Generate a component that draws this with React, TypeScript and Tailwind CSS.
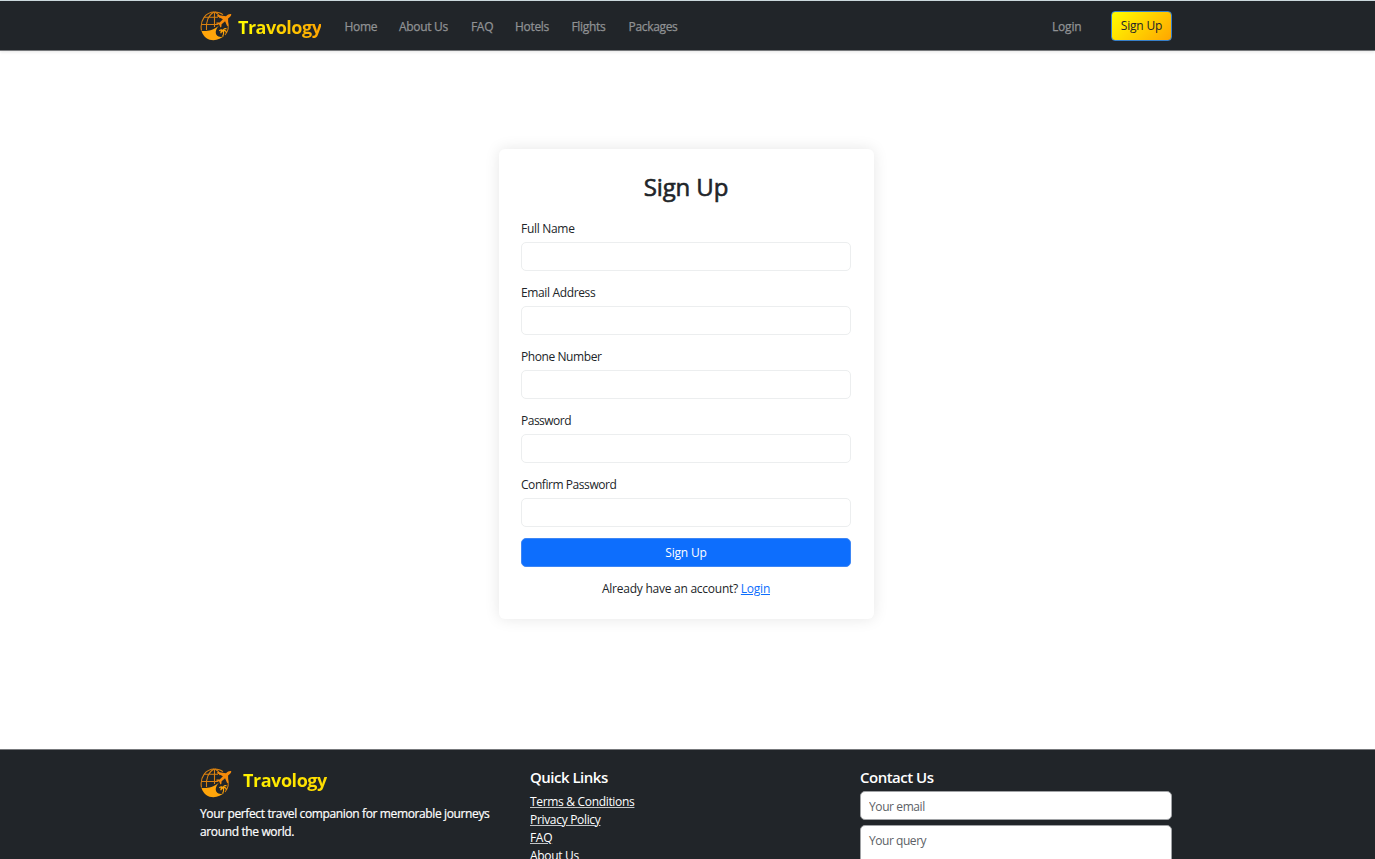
import React from "react";

function Logo() {
  return (
    <svg width="32" height="32" viewBox="0 0 32 32" fill="none" className="shrink-0">
      <g stroke="#d9800f" strokeWidth="1.1">
        <path d="M1.500 20.500C-.5 10 6 2 14.500 2c4 0 6.500 1 8.500 2.700" />
        <path d="M27.500 12c1.500 4.500.5 9.500-2.500 13" />
        <path d="M14.500 2v15M14 2C8.500 5 5.500 12 6.500 20M15 2c3 1.500 4.500 3.500 5.200 6M4 7.300h14M1.200 14.500h17" />
      </g>
      <path d="M1.500 21C7 21.500 13 20.500 19 15.500c-4 4.500-4.500 9-.5 11 2.500 1 5 .5 6.500-1.500C18 32.500 5 32.500 1.500 21Z" fill="#ffa50a" />
      <path d="M31.300 4.200c-1.800-.5-3.500.4-5.300 2l-8.300-1.100-1 1 6.200 3.100-3.200 3.400-3-.2-.8.8 3.300 1.400 1.200 2.800 1-.6.200-2.500 3.500-3 2.100 5 1-.9-.1-6.800c1.700-1.500 3.200-2.700 3.200-4.400Z" fill="#f58a0a" />
      <path d="M22.700 26.500c1-2 1.200-4 .6-6M23.200 20.500c-1.500-1-3-.8-3.800.5M23.200 20.500c-1.500.2-2.300 1.200-2.300 2.700M23.500 20.500c.3-1.700 1.500-2.300 3-1.700M23.500 20.500c1.800-.2 2.800.8 2.800 2.300" stroke="#ffa50a" strokeWidth="1.300" />
    </svg>
  );
}

const navItems = [
  { label: "Home", width: "w-[54.500px]" },
  { label: "About Us", width: "w-[72px]" },
  { label: "FAQ", width: "w-[44px]" },
  { label: "Hotels", width: "w-[56.500px]" },
  { label: "Flights", width: "w-[57px]" },
  { label: "Packages", width: "w-[60px]" },
];

const fields = [
  { label: "Full Name", tracking: "tracking-[-0.3px]" },
  { label: "Email Address", tracking: "tracking-[-0.36px]" },
  { label: "Phone Number", tracking: "tracking-[-0.42px]" },
  { label: "Password", tracking: "tracking-[-0.5px]" },
  { label: "Confirm Password", tracking: "tracking-[-0.44px]" },
];
const links = ["Terms & Conditions", "Privacy Policy", "FAQ", "About Us"];

export default function App() {
  return (
    <div className="flex h-[859px] w-full flex-col overflow-hidden bg-white font-['Open_Sans','Noto_Sans',sans-serif] text-[12px] leading-[18px] tracking-[-0.2px] text-[#212529]">
      <nav className="flex h-[51px] shrink-0 items-center border-t border-b border-t-[#cbd8dc] border-b-[#77797c] bg-[#212529] pl-[200px] shadow-[0_1px_3px_rgba(0,0,0,0.1)]">
        <div className="flex w-[972px] items-center">
          <Logo />
          <span className="ml-[6px] w-[106.500px] pt-[3px] whitespace-nowrap"><span className="inline-block bg-linear-to-r from-[#ffff00] to-[#ffa500] bg-clip-text text-[18px] leading-[27px] font-bold tracking-[-0.5px] text-transparent">Travology</span></span>
          <div className="flex grow pt-[2px] tracking-[-0.32px] text-[#909294] [-webkit-text-stroke:0.25px_#909294]">
            {navItems.map((n) => (
              <a key={n.label} className={n.width + " whitespace-nowrap"}>{n.label}</a>
            ))}
          </div>
          <a className="w-[59px] pt-[2px] text-[#909294] [-webkit-text-stroke:0.25px_#909294]">Login</a>
          <button className="h-[30px] w-[61px] rounded-[4px] border border-[#377fc8] bg-linear-135 from-[#ffff00] to-[#ffa500] text-[#212529]">Sign Up</button>
        </div>
      </nav>
      <main className="flex h-[698px] shrink-0 items-start pt-[98px] pl-[498.500px]">
        <form className="flex h-[470px] w-[375px] flex-col rounded-[6px] bg-white px-[22.500px] pt-[23px] shadow-[0_0_15px_rgba(0,0,0,0.1)]">
          <h2 className="mb-[13px] text-center text-[24px] leading-[29px] tracking-[-0.1px] [-webkit-text-stroke:0.6px_#212529]">Sign Up</h2>
          {fields.map((f) => (
            <div key={f.label} className="mb-[11px] flex flex-col pt-[6px]">
              <label className={"mb-[4px] h-[18px] " + f.tracking}>{f.label}</label>
              <input className="-mb-[4px] h-[29px] w-full rounded-[5px] border border-[#eceeef]" />
            </div>
          ))}
          <button type="button" className="mt-[4px] h-[29px] shrink-0 rounded-[5px] border border-[#3d86f5] bg-[#0d6efd] pt-px text-white">Sign Up</button>
          <p className="mt-[13px] text-center tracking-[-0.25px]">Already have an account? <a className="text-[#0d6efd] underline">Login</a></p>
        </form>
      </main>
      <footer className="flex h-[110px] shrink-0 border-t border-[#77797c] bg-[#212529] pl-[200px] text-white">
        <div className="w-[330px] pt-[17px]">
          <div className="flex items-center">
            <Logo />
            <span className="mb-[5px] ml-[11px] inline-block bg-linear-to-r from-[#fff200] to-[#ffdc00] bg-clip-text text-[18px] leading-[27px] font-bold tracking-[-0.45px] text-transparent">Travology</span>
          </div>
          <p className="mt-[6px] w-[312px] tracking-[-0.37px] [-webkit-text-stroke:0.2px_white]">Your perfect travel companion for memorable journeys around the world.</p>
        </div>
        <div className="w-[330px] pt-[18px]">
          <h5 className="mb-[7px] text-[15px] leading-[18px] font-semibold tracking-[-0.5px]">Quick Links</h5>
          <ul className="tracking-[-0.32px]">{links.map((l) => <li key={l} className="underline decoration-[#c3c5c7] decoration-1">{l}</li>)}</ul>
        </div>
        <div className="w-[312px] pt-[18px]">
          <h5 className="mb-[5px] text-[15px] leading-[18px] font-semibold tracking-[-0.5px]">Contact Us</h5>
          <input placeholder="Your email" className="block h-[29px] w-full rounded-[5px] border border-[#a0a2a5] bg-white px-[8px] pt-px tracking-[-0.4px] placeholder:text-[#5c6166]" />
          <textarea placeholder="Your query" className="mt-[5px] block h-[70px] w-full resize-none rounded-[5px] border border-[#a0a2a5] bg-white px-[8px] py-[6px] tracking-[-0.45px] placeholder:text-[#5c6166]" />
        </div>
      </footer>
    </div>
  );
}
